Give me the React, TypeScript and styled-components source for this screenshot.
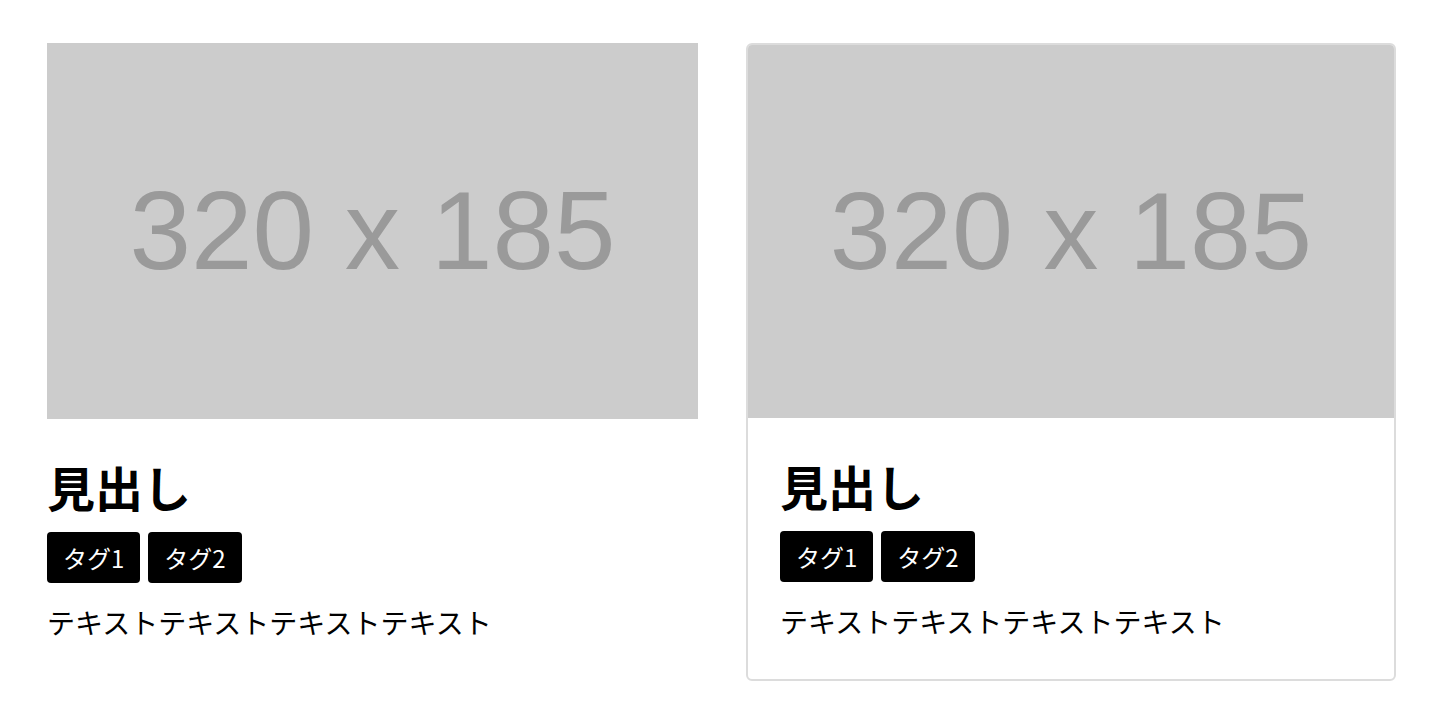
import React from "react";
import styled, { createGlobalStyle } from "styled-components";

const GlobalStyle = createGlobalStyle`
  html, body { margin: 0; padding: 0; background: #fff; }
  body { font-family: "Noto Sans CJK JP", "Noto Sans", sans-serif; color: #000; }
  * { box-sizing: border-box; }
`;

const Page = styled.div`
  display: grid;
  grid-template-columns: 651px 650px;
  column-gap: 48px;
  align-items: start;
  padding: 43px 0 0 47px;
`;

const Card = styled.article<{ $bordered?: boolean }>`
  display: flex;
  flex-direction: column;
  border: ${(p) => (p.$bordered ? "2px solid #dcdcdc" : "none")};
  border-radius: ${(p) => (p.$bordered ? "6px" : "0")};
  overflow: hidden;
  background: #fff;
`;

const Thumb = styled.div`
  container-type: inline-size;
  width: 100%;
  aspect-ratio: 320 / 185;
  background: #cccccc;
  display: flex;
  align-items: center;
  justify-content: center;
`;

const ThumbLabel = styled.span`
  font-family: "Liberation Sans", Arial, sans-serif;
  font-size: 17cqw;
  color: #9a9a9a;
  line-height: 1;
  white-space: pre;
`;

const Body = styled.div<{ $padded?: boolean }>`
  display: flex;
  flex-direction: column;
  align-items: flex-start;
  padding: ${(p) => (p.$padded ? "39px 32px 37px" : "39px 0 0")};
`;

const Heading = styled.h2`
  margin: 0 0 16px;
  font-size: 48px;
  font-weight: 700;
  line-height: 1.2;
`;

const Tags = styled.ul`
  display: flex;
  gap: 8px;
  list-style: none;
  margin: 0 0 18px;
  padding: 0;
`;

const Tag = styled.li`
  background: #000;
  color: #fff;
  font-size: 24px;
  line-height: 35px;
  padding: 8px 16px;
  border-radius: 4px;
`;

const Text = styled.p`
  margin: 0;
  font-size: 28px;
  line-height: 1.5;
`;

const CardItem = ({ bordered }: { bordered?: boolean }) => (
  <Card $bordered={bordered}>
    <Thumb>
      <ThumbLabel>320 x 185</ThumbLabel>
    </Thumb>
    <Body $padded={bordered}>
      <Heading>見出し</Heading>
      <Tags>
        <Tag>タグ1</Tag>
        <Tag>タグ2</Tag>
      </Tags>
      <Text>テキストテキストテキストテキスト</Text>
    </Body>
  </Card>
);

export default function App() {
  return (
    <>
      <GlobalStyle />
      <Page>
        <CardItem />
        <CardItem bordered />
      </Page>
    </>
  );
}
